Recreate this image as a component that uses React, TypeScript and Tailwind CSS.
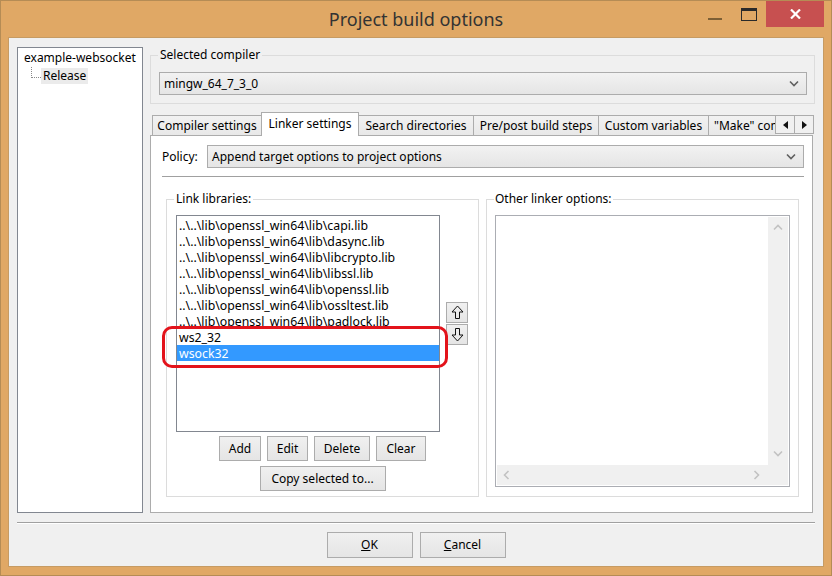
import type { ReactNode } from 'react';

const libs = [
  '..\\..\\lib\\openssl_win64\\lib\\capi.lib',
  '..\\..\\lib\\openssl_win64\\lib\\dasync.lib',
  '..\\..\\lib\\openssl_win64\\lib\\libcrypto.lib',
  '..\\..\\lib\\openssl_win64\\lib\\libssl.lib',
  '..\\..\\lib\\openssl_win64\\lib\\openssl.lib',
  '..\\..\\lib\\openssl_win64\\lib\\ossltest.lib',
  '..\\..\\lib\\openssl_win64\\lib\\padlock.lib',
  'ws2_32',
  'wsock32',
];

const Chevron = ({ dir = 'down', color = '#606060' }: { dir?: 'down' | 'up' | 'left' | 'right'; color?: string }) => {
  const pts = {
    down: '1,1.5 5,5.5 9,1.5',
    up: '1,5.5 5,1.5 9,5.5',
    left: '5.5,1 1.5,5 5.5,9',
    right: '1.5,1 5.5,5 1.5,9',
  }[dir];
  const vertical = dir === 'down' || dir === 'up';
  return (
    <svg width={vertical ? 10 : 7} height={vertical ? 7 : 10} viewBox={vertical ? '0 0 10 7' : '0 0 7 10'}>
      <polyline points={pts} fill="none" stroke={color} strokeWidth="1.6" />
    </svg>
  );
};

const ComboBox = ({ value, className = '' }: { value: string; className?: string }) => (
  <div
    className={`flex h-[23px] items-center justify-between border border-[#acacac] bg-linear-to-b from-[#f2f2f2] to-[#e5e5e5] pl-[4px] pr-[7px] ${className}`}
  >
    <span>{value}</span>
    <Chevron />
  </div>
);

const Btn = ({ children, className = '' }: { children: ReactNode; className?: string }) => (
  <div
    className={`flex h-[25px] items-center justify-center border border-[#acacac] bg-linear-to-b from-[#f0f0f0] to-[#e5e5e5] ${className}`}
  >
    {children}
  </div>
);

const ArrowBtn = ({ up }: { up?: boolean }) => (
  <div className="flex h-[21px] w-[22px] items-center justify-center border border-[#acacac] bg-linear-to-b from-[#f0f0f0] to-[#e5e5e5]">
    <svg width="13" height="15" viewBox="0 0 13 15" className={up ? '' : 'rotate-180'}>
      <polygon points="6.5,1 12,7 8.5,7 8.5,13.5 4.5,13.5 4.5,7 1,7" fill="none" stroke="#111" strokeWidth="1" />
    </svg>
  </div>
);

const Tab = ({ label, w, selected }: { label: string; w: string; selected?: boolean }) => (
  <div
    className={
      selected
        ? `relative z-10 -ml-px flex h-[24px] ${w} items-center justify-center border border-b-0 border-[#acacac] bg-white pb-[1px]`
        : `-ml-px flex h-[21px] ${w} items-center justify-center border border-b-0 border-[#acacac] bg-linear-to-b from-[#f2f2f2] to-[#e8e8e8] pb-[1px] first:ml-0`
    }
  >
    <span className="whitespace-nowrap">{label}</span>
  </div>
);

const ScrollTabBtn = ({ right }: { right?: boolean }) => (
  <div className="-ml-px flex h-[19px] w-[20px] items-center justify-center border border-[#acacac] bg-[#f0f0f0]">
    <svg width="5" height="8" viewBox="0 0 5 8">
      <polygon points={right ? '0,0 5,4 0,8' : '5,0 0,4 5,8'} fill="#111" />
    </svg>
  </div>
);

export default function App() {
  return (
    <div className="relative flex h-[576px] w-[832px] flex-col border border-[#b58c55] bg-[#e0a865] font-['Noto_Sans',sans-serif] text-[12px] leading-[16px] text-black">
      {/* title bar */}
      <div className="grid h-[36px] grid-cols-[123px_1fr_116px] pr-[7px]">
        <div />
        <div className="flex items-center justify-center text-[18px] text-[#333]">Project build options</div>
        <div className="flex items-start">
          <div className="mt-[17px] h-[2px] w-[14px] bg-[#7d5f35]" />
          <div className="ml-[19px] mt-[7px] h-[13px] w-[16px] border border-t-[3px] border-[#2a2a2a]" />
          <div className="ml-[9px] flex h-[26px] w-[58px] items-center justify-center bg-[#c75050]">
            <svg width="11" height="10" viewBox="0 0 11 10">
              <path d="M1 0.5 L10 9.5 M10 0.5 L1 9.5" stroke="#fff" strokeWidth="2.2" />
            </svg>
          </div>
        </div>
      </div>

      {/* dialog body */}
      <div className="mx-[7px] mb-[8px] flex flex-1 flex-col border border-[#c69b63] bg-[#f0f0f0] px-[8px] pt-[9px] pb-[8px]">
        <div className="flex gap-[7px]">
          {/* target tree */}
          <div className="h-[466px] w-[126px] border border-[#828790] bg-white pt-[1px]">
            <div className="h-[18px] pl-[6px] leading-[18px]">example-websocket</div>
            <div className="flex h-[18px] items-start pl-[13px]">
              <div className="h-[11px] w-[10px] border-b border-l border-dotted border-[#8a8a8a]" />
              <span className="mt-[1px] bg-[#ebebeb] px-[2px] leading-[16px]">Release</span>
            </div>
          </div>

          {/* right side */}
          <div className="flex w-[665px] flex-col">
            <fieldset className="border border-[#dcdcdc] px-[7px] pb-[8px]">
              <legend className="px-[2px] leading-[16px]">Selected compiler</legend>
              <ComboBox value="mingw_64_7_3_0" className="ml-px mt-[9px]" />
            </fieldset>

            {/* tabs */}
            <div className="mt-[8px] flex h-[24px] items-end pl-[2px] pr-[1px]">
              <Tab label="Compiler settings" w="w-[110px]" />
              <Tab label="Linker settings" w="w-[98px]" selected />
              <Tab label="Search directories" w="w-[116px]" />
              <Tab label="Pre/post build steps" w="w-[126px]" />
              <Tab label="Custom variables" w="w-[111px]" />
              <div className="-ml-px flex h-[21px] min-w-0 flex-1 items-center overflow-hidden border-t border-l border-[#acacac] bg-linear-to-b from-[#f2f2f2] to-[#e8e8e8] pb-[1px] pl-[5px]">
                <span className="whitespace-nowrap">"Make" commands</span>
              </div>
              <div className="mb-[2px] flex">
                <ScrollTabBtn />
                <ScrollTabBtn right />
              </div>
            </div>

            {/* tab page */}
            <div className="-mt-px mr-[2px] h-[378px] border border-[#acacac] bg-white pl-[11px] pr-[8px] pt-[9px]">
              <div className="flex items-center">
                <span className="w-[45px]">Policy:</span>
                <ComboBox value="Append target options to project options" className="flex-1" />
              </div>
              <div className="mt-[8px] border-t border-[#a0a0a0]" />

              <div className="ml-[4px] mt-[14px] flex h-[306px] gap-[7px]">
                <fieldset className="flex w-[313px] flex-col border border-[#dcdcdc] px-[7px] pb-[5px]">
                  <legend className="px-[2px] leading-[16px]">Link libraries:</legend>
                  <div className="mt-[8px] flex items-center">
                    <div className="ml-[2px] h-[217px] w-[264px] border border-[#828790] bg-white pt-[1px] text-[12.3px]">
                      {libs.map((lib) => (
                        <div
                          key={lib}
                          className={`h-[16px] whitespace-nowrap pl-[2px] leading-[17px] ${lib === 'wsock32' ? 'bg-[#3399ff] text-white' : ''}`}
                        >
                          {lib}
                        </div>
                      ))}
                    </div>
                    <div className="ml-[6px] flex flex-col gap-[1px]">
                      <ArrowBtn up />
                      <ArrowBtn />
                    </div>
                  </div>
                  <div className="mt-[4px] flex justify-center gap-[6px]">
                    <Btn className="w-[42px]">Add</Btn>
                    <Btn className="w-[41px]">Edit</Btn>
                    <Btn className="w-[56px]">Delete</Btn>
                    <Btn className="w-[50px]">Clear</Btn>
                  </div>
                  <div className="mt-[5px] flex justify-center">
                    <Btn className="w-[126px]">Copy selected to...</Btn>
                  </div>
                </fieldset>

                <fieldset className="flex w-[313px] flex-col border border-[#dcdcdc] px-[6px] pb-[9px]">
                  <legend className="ml-[1px] px-[1px] leading-[16px]">Other linker options:</legend>
                  <div className="mx-[2px] mt-[8px] flex h-[272px] flex-col border border-[#abadb3] bg-white p-px">
                    <div className="flex flex-1">
                      <div className="flex-1" />
                      <div className="flex w-[20px] flex-col items-center justify-between bg-[#f0f0f0] pb-[8px] pt-[7px]">
                        <Chevron dir="up" color="#c2c2c2" />
                        <Chevron dir="down" color="#c2c2c2" />
                      </div>
                    </div>
                    <div className="flex h-[20px] bg-[#f0f0f0]">
                      <div className="flex flex-1 items-center justify-between pl-[6px] pr-[8px]">
                        <Chevron dir="left" color="#c2c2c2" />
                        <Chevron dir="right" color="#c2c2c2" />
                      </div>
                      <div className="w-[20px]" />
                    </div>
                  </div>
                </fieldset>
              </div>
            </div>
          </div>
        </div>

        <div className="mt-[9px] border-b border-t border-b-white border-t-[#a0a0a0]" />
        <div className="mt-[8px] flex justify-center gap-[7px]">
          <Btn className="h-[26px] w-[86px] border-[#3d9aef]">
            <span>
              <span className="underline">O</span>K
            </span>
          </Btn>
          <Btn className="h-[26px] w-[86px]">
            <span>
              <span className="underline">C</span>ancel
            </span>
          </Btn>
        </div>
      </div>

      {/* annotation */}
      <div className="absolute left-[161px] top-[325px] h-[42px] w-[286px] rounded-[10px] border-[3px] border-[#e3131b]" />
    </div>
  );
}
